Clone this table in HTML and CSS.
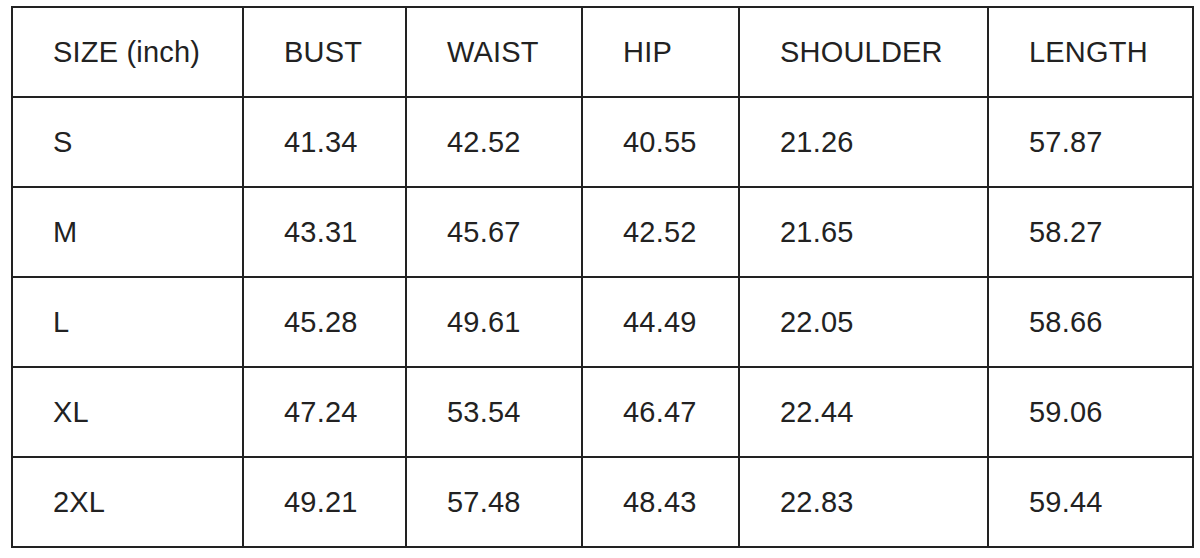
FILE: index.html
```html
<!DOCTYPE html>
<html>
<head>
<meta charset="utf-8">
<link rel="stylesheet" href="styles.css">
</head>
<body>
<table class="size-table">
  <colgroup>
    <col class="c1"><col class="c2"><col class="c3"><col class="c4"><col class="c5"><col class="c6">
  </colgroup>
  <tr><td>SIZE (inch)</td><td>BUST</td><td>WAIST</td><td>HIP</td><td>SHOULDER</td><td>LENGTH</td></tr>
  <tr><td>S</td><td>41.34</td><td>42.52</td><td>40.55</td><td>21.26</td><td>57.87</td></tr>
  <tr><td>M</td><td>43.31</td><td>45.67</td><td>42.52</td><td>21.65</td><td>58.27</td></tr>
  <tr><td>L</td><td>45.28</td><td>49.61</td><td>44.49</td><td>22.05</td><td>58.66</td></tr>
  <tr><td>XL</td><td>47.24</td><td>53.54</td><td>46.47</td><td>22.44</td><td>59.06</td></tr>
  <tr><td>2XL</td><td>49.21</td><td>57.48</td><td>48.43</td><td>22.83</td><td>59.44</td></tr>
</table>
</body>
</html>
```
FILE: styles.css
```css
html, body {
  margin: 0;
  padding: 0;
  background: #ffffff;
}
body {
  padding: 6px 0 0 11px;
  font-family: "Liberation Sans", Arial, sans-serif;
  color: #222222;
}
.size-table {
  border-collapse: collapse;
  table-layout: fixed;
  width: 1181px;
  border: 2px solid #222222;
}
.size-table td {
  border: 2px solid #222222;
  height: 88px;
  padding: 0 0 0 40px;
  font-size: 29px;
  letter-spacing: 0.2px;
  vertical-align: middle;
  text-align: left;
  white-space: nowrap;
}
.c1 { width: 231px; }
.c2 { width: 163px; }
.c3 { width: 176px; }
.c4 { width: 157px; }
.c5 { width: 249px; }
.c6 { width: 205px; }
```
